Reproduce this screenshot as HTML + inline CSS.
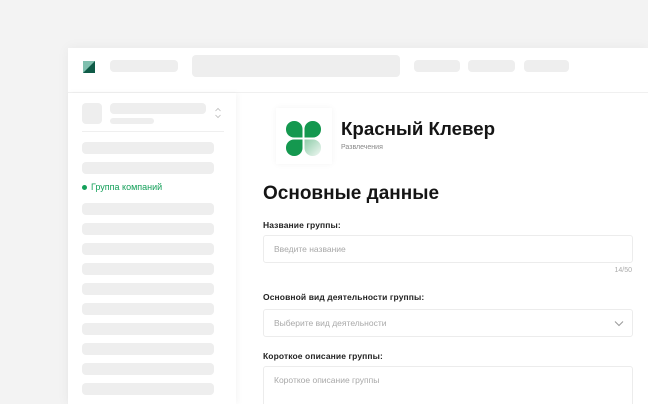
<!DOCTYPE html>
<html><head><meta charset="utf-8"><style>
*{margin:0;padding:0;box-sizing:border-box}
html,body{width:648px;height:404px;overflow:hidden}
body{background:#f3f3f3;font-family:"Liberation Sans",sans-serif;position:relative}
.a{position:absolute}
.sk{position:absolute;background:#eeeeee;border-radius:4px}
.win{position:absolute;left:68px;top:48px;width:580px;height:356px;background:#fff;box-shadow:0 0 12px rgba(0,0,0,.05)}
.lbl{position:absolute;left:263px;font-size:8.5px;font-weight:bold;color:#222;letter-spacing:.1px}
.inp{position:absolute;left:263px;width:370px;border:1px solid #ececec;border-radius:3px;background:#fff}
.ph{position:absolute;left:10px;font-size:8.5px;color:#a8a8a8}
</style></head><body>
<div class="win"></div>
<div class="a" style="left:68px;top:92px;width:580px;height:1px;background:#f0f0f0"></div>
<div class="a" style="left:68px;top:93px;width:168px;height:311px;background:#fff;box-shadow:2px 0 6px rgba(0,0,0,.04)"></div>
<svg class="a" style="left:83px;top:61px" width="12" height="12"><rect width="12" height="12" fill="#7fbfae"/><path d="M12 0V12H0Z" fill="#0f5b47"/></svg>
<div class="sk" style="left:110px;top:60px;width:68px;height:12px"></div>
<div class="sk" style="left:192px;top:55px;width:208px;height:22px"></div>
<div class="sk" style="left:414px;top:60px;width:46px;height:12px"></div>
<div class="sk" style="left:468px;top:60px;width:47px;height:12px"></div>
<div class="sk" style="left:524px;top:60px;width:45px;height:12px"></div>
<div class="sk" style="left:82px;top:103px;width:20px;height:21px"></div>
<div class="sk" style="left:110px;top:103px;width:96px;height:11px"></div>
<div class="sk" style="left:110px;top:118px;width:44px;height:6px"></div>
<svg class="a" style="left:214px;top:107px" width="8" height="12"><path d="M1.5 4 4 1.5 6.5 4M1.5 8 4 10.5 6.5 8" fill="none" stroke="#bbb" stroke-width=".8"/></svg>
<div class="a" style="left:82px;top:131px;width:142px;height:1px;background:#efefef"></div>
<div class="sk" style="left:82px;top:142px;width:132px;height:12px"></div>
<div class="sk" style="left:82px;top:162px;width:132px;height:12px"></div>
<div class="a" style="left:82px;top:185px;width:5px;height:5px;border-radius:50%;background:#14a05a"></div>
<div class="a" style="left:91px;top:182px;font-size:9px;color:#14a05a">Группа компаний</div>
<div class="sk" style="left:82px;top:203px;width:132px;height:12px"></div>
<div class="sk" style="left:82px;top:223px;width:132px;height:12px"></div>
<div class="sk" style="left:82px;top:243px;width:132px;height:12px"></div>
<div class="sk" style="left:82px;top:263px;width:132px;height:12px"></div>
<div class="sk" style="left:82px;top:283px;width:132px;height:12px"></div>
<div class="sk" style="left:82px;top:303px;width:132px;height:12px"></div>
<div class="sk" style="left:82px;top:323px;width:132px;height:12px"></div>
<div class="sk" style="left:82px;top:343px;width:132px;height:12px"></div>
<div class="sk" style="left:82px;top:363px;width:132px;height:12px"></div>
<div class="sk" style="left:82px;top:383px;width:132px;height:12px"></div>
<div class="a" style="left:276px;top:108px;width:56px;height:56px;background:#fff;box-shadow:0 0 6px rgba(0,0,0,.05)"></div>
<svg class="a" style="left:286px;top:121px" width="36" height="36">
<defs><linearGradient id="g" x1="0" y1="0" x2="1" y2="1"><stop offset="0" stop-color="#8fcca9"/><stop offset="1" stop-color="#f0f8f3"/></linearGradient></defs>
<path d="M16.5 16.5H8A8 8 0 0 1 0 8.5V8A8 8 0 0 1 8 0H8.5A8 8 0 0 1 16.5 8Z" fill="#14984f"/>
<path d="M18.5 16.5H27A8 8 0 0 0 35 8.5V8A8 8 0 0 0 27 0H26.5A8 8 0 0 0 18.5 8Z" fill="#14984f"/>
<path d="M16.5 18.5H8A8 8 0 0 0 0 26.5V27A8 8 0 0 0 8 35H8.5A8 8 0 0 0 16.5 27Z" fill="#14984f"/>
<path d="M18.5 18.5H27A8 8 0 0 1 35 26.5V27A8 8 0 0 1 27 35H26.5A8 8 0 0 1 18.5 27Z" fill="url(#g)"/>
</svg>
<div class="a" style="left:341px;top:118px;font-size:18.7px;font-weight:bold;color:#151515">Красный Клевер</div>
<div class="a" style="left:341px;top:144px;font-size:7px;color:#888">Развлечения</div>
<div class="a" style="left:263px;top:183px;font-size:19px;font-weight:bold;color:#151515">Основные данные</div>
<div class="lbl" style="top:220px">Название группы:</div>
<div class="inp" style="top:235px;height:28px"><div class="ph" style="top:8px">Введите название</div></div>
<div class="a" style="left:600px;top:267px;width:32px;text-align:right;font-size:7px;color:#aaa">14/50</div>
<div class="lbl" style="top:292px">Основной вид деятельности группы:</div>
<div class="inp" style="top:309px;height:28px"><div class="ph" style="top:8px">Выберите вид деятельности</div>
<svg class="a" style="left:350px;top:10px" width="10" height="7"><path d="M1 1.5 5 5.5 9 1.5" fill="none" stroke="#999" stroke-width="1"/></svg></div>
<div class="lbl" style="top:351px">Короткое описание группы:</div>
<div class="inp" style="top:366px;height:50px"><div class="ph" style="top:8px">Короткое описание группы</div></div>
</body></html>
